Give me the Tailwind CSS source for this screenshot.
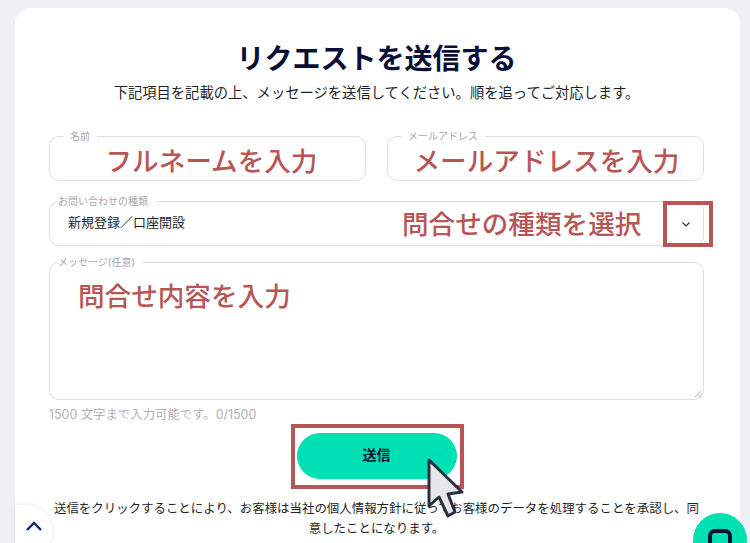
<!DOCTYPE html>
<html lang="ja">
<head>
  <meta charset="UTF-8">
  <title>リクエストを送信する</title>
  <script src="https://cdn.jsdelivr.net/npm/@tailwindcss/browser@4"></script>
</head>
<body class="bg-[#eef0f4] text-[#1c1f2a] font-['Inter','Noto_Sans_CJK_JP',sans-serif] overflow-hidden">
  <div class="relative w-[750px] h-[543px] overflow-hidden pt-2 pl-[15px]">
    <main class="bg-white w-[725px] h-[600px] rounded-[16px] pt-[31px] pl-[34px] pr-[36px]">
      <h1 class="text-[28px] leading-[40px] font-bold text-center text-[#0a1035]">リクエストを送信する</h1>
      <p class="text-[14.3px] leading-[20px] text-center mt-[4px] whitespace-nowrap">下記項目を記載の上、メッセージを送信してください。順を追ってご対応します。</p>

      <form class="mt-[26px]">
        <div class="flex gap-[21px]">
          <fieldset class="w-[317px] h-[52px] border border-[#dcdfe3] rounded-[10px] px-3">
            <legend class="text-[10px] leading-[14px] text-[#a5a8ad] px-[7px] ml-[1px]">名前</legend>
            <div class="text-[#b85656] text-[26.6px] leading-[32px] font-medium text-center mt-[2px] ml-[8px] whitespace-nowrap">フルネームを入力</div>
          </fieldset>
          <fieldset class="w-[317px] h-[52px] border border-[#dcdfe3] rounded-[10px] px-3">
            <legend class="text-[10px] leading-[14px] text-[#a5a8ad] px-[7px] ml-[1px]">メールアドレス</legend>
            <div class="text-[#b85656] text-[26.6px] leading-[32px] font-medium text-center mt-[2px] ml-[2px] whitespace-nowrap">メールアドレスを入力</div>
          </fieldset>
        </div>

        <fieldset class="h-[52px] mt-[13px] border border-[#dcdfe3] rounded-[10px] pl-[18px] pr-3">
          <legend class="text-[10px] leading-[14px] text-[#a5a8ad] pr-[8px] -ml-[10px]">お問い合わせの種類</legend>
          <div class="flex items-center h-[32px] -mt-[1px]">
            <span class="text-[13px] w-[334px]">新規登録／口座開設</span>
            <span class="text-[#b85656] text-[26.6px] leading-[32px] font-medium mt-[2px] whitespace-nowrap">問合せの種類を選択</span>
          </div>
        </fieldset>

        <fieldset class="h-[145px] mt-[9px] border border-[#dcdfe3] rounded-[10px] pl-[28px] relative">
          <legend class="text-[10px] leading-[14px] text-[#a5a8ad] pr-[8px] -ml-[20px]">メッセージ(任意)</legend>
          <div class="text-[#b85656] text-[26.6px] leading-[32px] font-medium mt-[11px]">問合せ内容を入力</div>
          <svg class="absolute right-[1px] bottom-[1px] w-[8px] h-[8px]" viewBox="0 0 8 8" fill="none" stroke="#9a9a9a" stroke-width="0.8"><path d="M1 7 7 1M4.5 7 7 4.5"/></svg>
        </fieldset>

        <p class="text-[12.4px] leading-[16px] text-[#b0b2b6] mt-[7px]">1500 文字まで入力可能です。0/1500</p>

        <div class="flex justify-center mt-[10px]">
          <button type="button" class="w-[160px] h-[46px] rounded-full bg-[#00e0b5] text-[14px] font-bold text-[#0a1035] pb-[3px]">送信</button>
        </div>

        <p class="text-[12.45px] leading-[20px] text-center mt-[20px] px-[3px]">送信をクリックすることにより、お客様は当社の個人情報方針に従ってお客様のデータを処理することを承認し、同意したことになります。</p>
      </form>
    </main>

    <!-- annotation boxes -->
    <div class="absolute left-[663px] top-[201px] w-[50px] h-[46px] border-[4px] border-[#b85656] flex items-center justify-center">
      <svg class="w-[10px] h-[10px] -mt-[1px] -ml-[4px]" viewBox="0 0 10 10" fill="none" stroke="#333" stroke-width="1.2"><path d="M1.5 3.5 5 7l3.5-3.5"/></svg>
    </div>
    <div class="absolute left-[291px] top-[424px] w-[173px] h-[65px] border-[4px] border-[#b85656]"></div>

    <!-- mouse cursor -->
    <svg class="absolute left-[424px] top-[456px] w-[44px] h-[64px]" viewBox="0 0 44 64">
      <path d="M5 4 5 50 15 41 24 60 31 56 24 38 38 36Z" fill="#e6e7ea" stroke="#2b3040" stroke-width="3" stroke-linejoin="round"/>
    </svg>

    <!-- scroll to top -->
    <div class="absolute left-[15px] top-[505px] w-[37px] h-[54px] rounded-r-full bg-white shadow-[0_0_6px_rgba(0,0,0,0.08)] flex justify-center pt-[15px]">
      <svg class="w-[18px] h-[12px]" viewBox="0 0 18 12" fill="none" stroke="#0a2a66" stroke-width="2.4"><path d="M2 10 9 3l7 7"/></svg>
    </div>

    <!-- chat button -->
    <div class="absolute left-[693px] top-[513px] w-[54px] h-[54px] rounded-full bg-[#00e0b5] flex justify-center pt-[16px]">
      <div class="w-[24px] h-[30px] border-[4px] border-[#0a1035] rounded-[7px]"></div>
    </div>
  </div>
</body>
</html>
